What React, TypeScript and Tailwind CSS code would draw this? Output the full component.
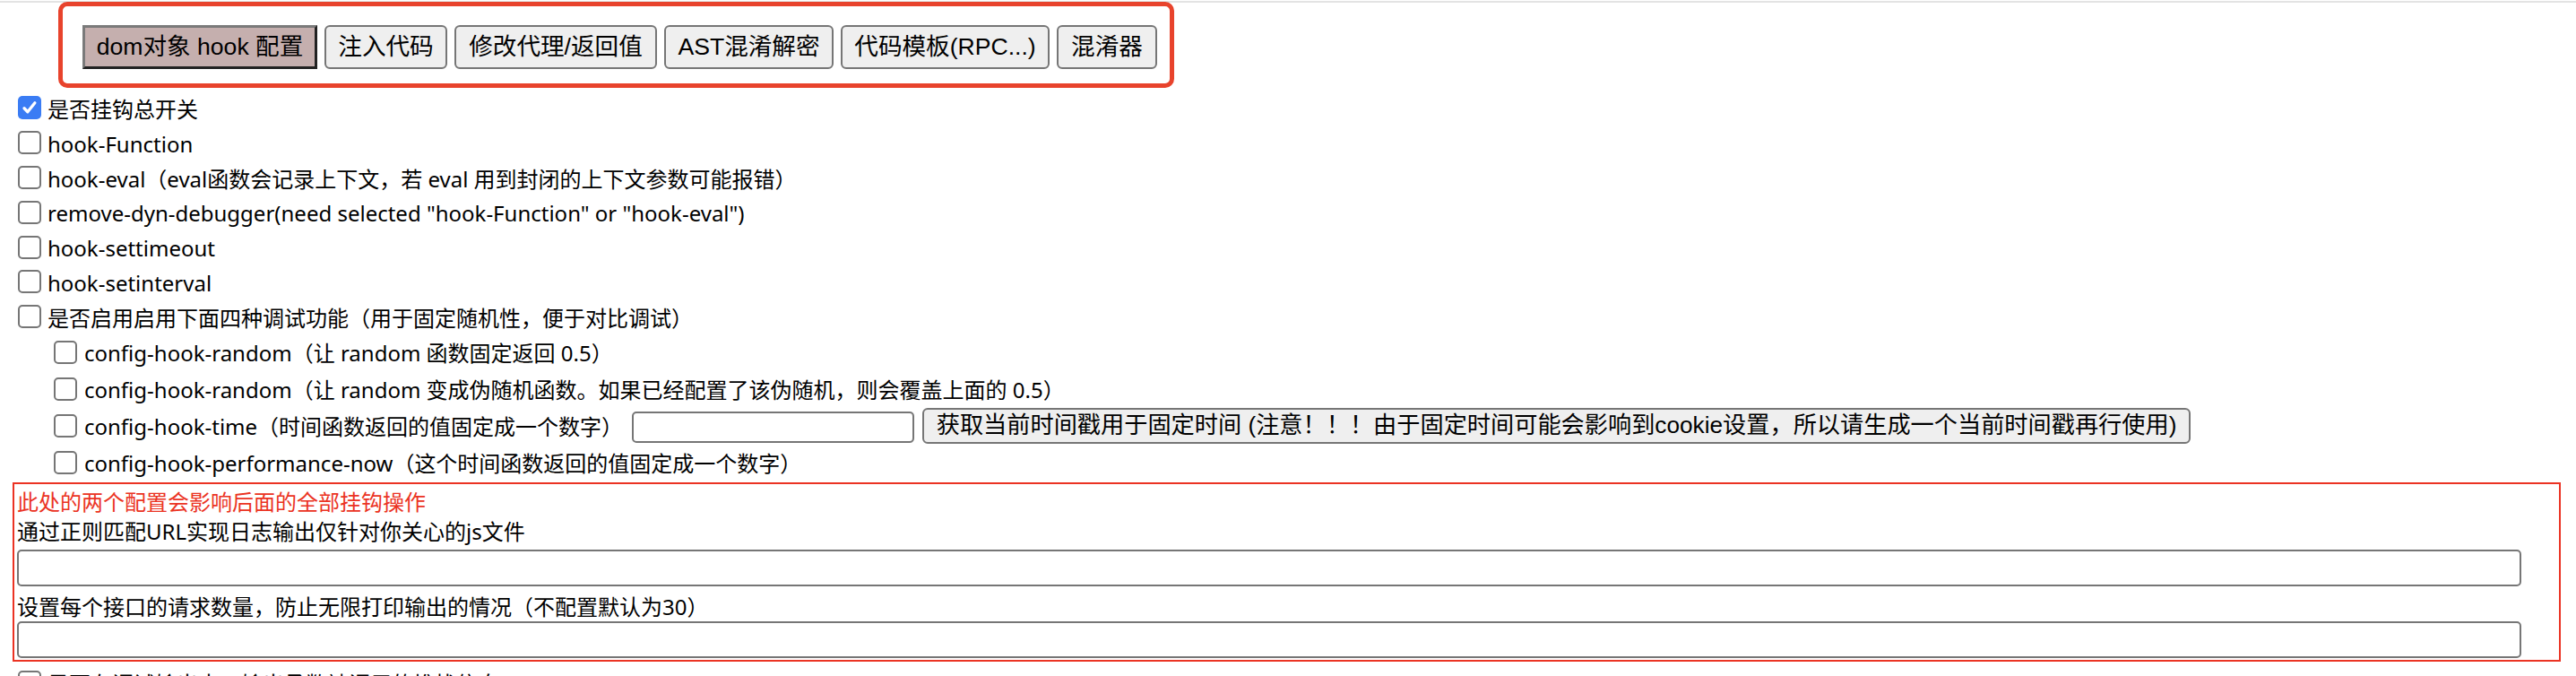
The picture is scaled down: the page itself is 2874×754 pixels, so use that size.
import React from "react";

const body = { fontFamily: '"Noto Sans", "Noto Sans CJK SC", sans-serif' };
const btnFont = { fontFamily: '"Liberation Sans", "Noto Sans CJK SC", sans-serif' };

const tabs = [
  { label: "dom对象 hook 配置", w: "w-[262px]", active: true },
  { label: "注入代码", w: "w-[137px]" },
  { label: "修改代理/返回值", w: "w-[226px]" },
  { label: "AST混淆解密", w: "w-[189px]" },
  { label: "代码模板(RPC...)", w: "w-[233px]" },
  { label: "混淆器", w: "w-[112px]" },
];

const topRows = [
  "hook-Function",
  "hook-eval（eval函数会记录上下文，若 eval 用到封闭的上下文参数可能报错）",
  'remove-dyn-debugger(need selected "hook-Function" or "hook-eval")',
  "hook-settimeout",
  "hook-setinterval",
  "是否启用启用下面四种调试功能（用于固定随机性，便于对比调试）",
];

const Check = ({ checked = false }: { checked?: boolean }) =>
  checked ? (
    <span className="w-[26px] h-[26px] rounded-[5px] bg-[#3a7cf4] flex items-center justify-center shrink-0">
      <svg viewBox="0 0 16 16" className="w-[20px] h-[20px]">
        <path
          d="M3.2 8.6l3.1 3.2 6.4-8"
          stroke="white"
          strokeWidth="2.6"
          fill="none"
          strokeLinecap="round"
          strokeLinejoin="round"
        />
      </svg>
    </span>
  ) : (
    <span className="w-[26px] h-[26px] rounded-[5px] border-2 border-[#767676] bg-white shrink-0" />
  );

const Row = ({ children, checked }: { children: React.ReactNode; checked?: boolean }) => (
  <div className="h-[38.8px] pl-[20px] flex items-center gap-[7px] whitespace-nowrap">
    <Check checked={checked} />
    <span className="pt-[3px]">{children}</span>
  </div>
);

const SubRow = ({ children }: { children: React.ReactNode }) => (
  <div className="h-[41px] pl-[60px] flex items-center gap-[8px] whitespace-nowrap">
    <Check />
    {children}
  </div>
);

export default function App() {
  return (
    <div className="bg-white text-black text-[24px] min-h-screen pt-px" style={body}>
      <div className="h-[2px] bg-[#e3e3e3]" />

      {/* tab bar */}
      <div className="-mt-px ml-[65px] inline-flex gap-2 border-[5px] border-[#e8432c] rounded-[10px] pl-[22px] pr-[14px] pt-[21px] pb-[16px]">
        {tabs.map((t) =>
          t.active ? (
            <button
              key={t.label}
              style={btnFont}
              className={`${t.w} h-[49px] text-[26.6px] bg-[#c5afae] border-[3px] border-t-[#7a7a7a] border-l-[#7a7a7a] border-b-[#222] border-r-[#222] flex items-center justify-center whitespace-nowrap`}
            >
              {t.label}
            </button>
          ) : (
            <button
              key={t.label}
              style={btnFont}
              className={`${t.w} h-[49px] text-[26.6px] bg-[#efefef] border-2 border-[#767676] rounded-[6px] flex items-center justify-center whitespace-nowrap`}
            >
              {t.label}
            </button>
          )
        )}
      </div>

      {/* options */}
      <div className="mt-[3px]">
        <Row checked>是否挂钩总开关</Row>
        {topRows.map((r) => (
          <Row key={r}>{r}</Row>
        ))}
        <SubRow>
          <span className="pt-[2px]">config-hook-random（让 random 函数固定返回 0.5）</span>
        </SubRow>
        <SubRow>
          <span className="pt-[2px]">config-hook-random（让 random 变成伪随机函数。如果已经配置了该伪随机，则会覆盖上面的 0.5）</span>
        </SubRow>
        <SubRow>
          <span className="pt-[2px]">config-hook-time（时间函数返回的值固定成一个数字）</span>
          <input className="ml-[2px] mt-[3px] w-[315px] h-[35px] border-2 border-[#767676] rounded-[5px] bg-white" />
          <button
            style={btnFont}
            className="ml-[1px] w-[1415px] h-[40px] text-[26.2px] bg-[#efefef] border-2 border-[#767676] rounded-[6px] flex items-center justify-center whitespace-nowrap overflow-hidden"
          >
            获取当前时间戳用于固定时间 (注意！！！由于固定时间可能会影响到cookie设置，所以请生成一个当前时间戳再行使用)
          </button>
        </SubRow>
        <SubRow>
          <span className="pt-[2px]">config-hook-performance-now（这个时间函数返回的值固定成一个数字）</span>
        </SubRow>
      </div>

      {/* global filters */}
      <div className="mt-px ml-[14px] w-[2843px] border-2 border-[#eb3323] pt-[3px] pl-[3px] pb-[2px]">
        <div className="h-[33px] leading-[33px] text-[#eb3323]">此处的两个配置会影响后面的全部挂钩操作</div>
        <div className="h-[33px] leading-[33px]">通过正则匹配URL实现日志输出仅针对你关心的js文件</div>
        <input className="block mt-[4px] w-[2794px] h-[41px] border-2 border-[#767676] rounded-[5px] bg-white" />
        <div className="h-[39px] pt-[6px] leading-[33px]">设置每个接口的请求数量，防止无限打印输出的情况（不配置默认为30）</div>
        <input className="block w-[2794px] h-[41px] border-2 border-[#767676] rounded-[5px] bg-white" />
      </div>

      <div className="mt-[10px] pl-[20px] flex items-start gap-[7px] whitespace-nowrap">
        <Check />
        <span className="leading-[30px]">是否在调试输出中，输出函数被调用的堆栈信息</span>
      </div>
    </div>
  );
}
